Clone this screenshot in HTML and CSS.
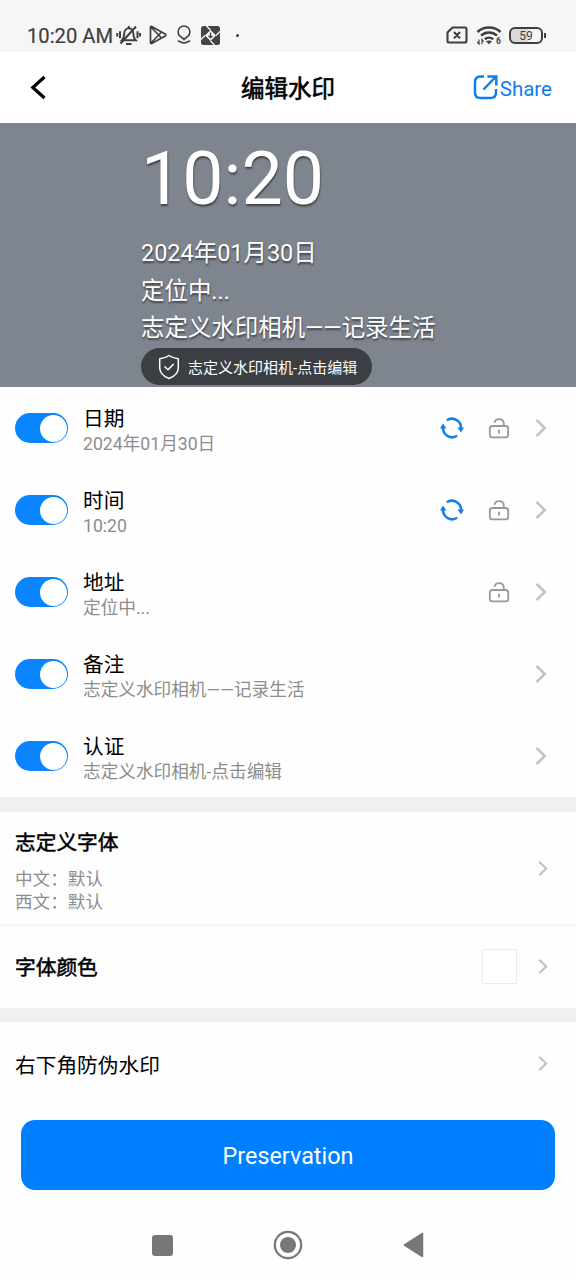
FILE: index.html
```html
<!DOCTYPE html>
<html lang="zh-CN">
<head>
<meta charset="utf-8">
<title>编辑水印</title>
<link rel="stylesheet" href="styles.css">
</head>
<body>
<svg class="defs" width="0" height="0" aria-hidden="true">
  <symbol id="sync" viewBox="0 0 24 24">
    <path d="M6.800 4.200A9.200 9.200 0 0 1 21 12M17.200 19.800A9.200 9.200 0 0 1 3 12" fill="none" stroke="currentColor" stroke-width="2.500"/>
    <path d="M17.600 11.600h6.400l-3 5zM0 12.400h6.400L3 7.400z" fill="currentColor"/>
  </symbol>
  <symbol id="lock" viewBox="0 0 22 22">
    <rect x="1.800" y="9" width="18.400" height="11.300" rx="2.600" fill="none" stroke="currentColor" stroke-width="1.800"/>
    <path d="M6.300 5.800C7 3.400 8.600 2.200 11 2.200c3 0 4.800 2 4.800 4.600V9M11 12.800v3.800" fill="none" stroke="currentColor" stroke-width="1.800"/>
  </symbol>
  <symbol id="chevron" viewBox="0 0 12 20">
    <path d="M1.500 1.800L9.800 10l-8.300 8.200" fill="none" stroke="currentColor" stroke-width="2.600"/>
  </symbol>
</svg>

<header class="status">
  <span class="clock">10:20 AM</span>
  <svg class="st-bell" width="25" height="22" viewBox="0 0 25 22" fill="none" stroke="currentColor" stroke-width="2">
    <path d="M6 16.200c1.700-1.600 2.200-3.200 2.200-6.400 0-3.200 2-5.600 4.600-5.600s4.600 2.400 4.600 5.600c0 3.200.5 4.800 2.200 6.400zM12.800 2v2.500"/>
    <path d="M10 20h5.500M4.500 19.500L20 2.500M1.200 9v3.600M4 7.200v7M21.500 7.200v7M24 9v3.600"/>
  </svg>
  <svg class="st-play" width="18" height="20" viewBox="0 0 18 20" fill="none" stroke="currentColor" stroke-width="1.700" stroke-linejoin="round">
    <path d="M1.500 2.200v15.600c0 .8.6 1 1.200.6L16.200 11c.8-.5.8-1.500 0-2L2.700 1.500c-.6-.3-1.200 0-1.200.7zM2 2l10.500 11M2 18L12.500 7"/>
  </svg>
  <svg class="st-pin" width="14" height="20" viewBox="0 0 14 20" fill="none" stroke="currentColor" stroke-width="1.600">
    <path d="M7 14.400L3 11.200a5.900 5.900 0 1 1 8 0zM1 15.600c3.400 3 8.600 3 12 0"/>
  </svg>
  <svg class="st-app" width="19" height="19" viewBox="0 0 19 19">
    <rect width="19" height="19" rx="2.500" fill="#444"/>
    <path d="M9.500 4l5.500 5.500L9.500 15 4 9.500z" fill="#f6f6f6"/>
    <path d="M9.500 4L5.500 0M15 9.500L19 5.500M9.500 15l4 4M4 9.500L0 13.500" stroke="#f6f6f6" stroke-width="1.400"/>
    <path d="M9.500 6.500v5M7.500 9.800l2 2 2-2" stroke="#444" stroke-width="1.300" fill="none"/>
  </svg>
  <i class="st-dot"></i>
  <div class="st-right">
    <svg width="22" height="18" viewBox="0 0 22 18" fill="none" stroke="currentColor" stroke-width="2.100">
      <path d="M6.500 1.500H19a1.500 1.500 0 0 1 1.500 1.500v12a1.500 1.500 0 0 1-1.500 1.500H3A1.500 1.500 0 0 1 1.500 15V6.500zM8 6l6 6.400M14 6l-6 6.400"/>
    </svg>
    <svg class="wifi" width="26" height="23" viewBox="0 -2 26 23">
      <path d="M1.500 6c6.200-6 16.800-6 23 0M5 9.700c4.600-4.200 11.400-4.200 16 0M8.800 13.200c2.400-2 6-2 8.400 0" fill="none" stroke="currentColor" stroke-width="2.500"/>
      <path d="M10 15.300c1.800-1.200 4.200-1.200 6 0l-3 3z" fill="currentColor"/>
      <path d="M3 13.500v4.500l-1.800-2M6 18v-4.500l1.600 2" fill="none" stroke="currentColor" stroke-width="1.200"/>
      <text x="20" y="18.200" class="wifi-n">6</text>
    </svg>
    <div class="battery"><span>59</span></div><i class="nub"></i>
  </div>
</header>

<nav class="titlebar">
  <svg class="back" width="18" height="26" viewBox="0 0 18 26"><path d="M15.500 2L3.800 12.500l11.700 10.500" fill="none" stroke="#000" stroke-width="3.200"/></svg>
  <h1>编辑水印</h1>
  <a class="share">
    <svg width="26" height="26" viewBox="0 0 26 26" fill="none" stroke="currentColor" stroke-width="2.500">
      <path d="M11 2.500H7.500c-3.500 0-5.500 2-5.500 5.500v10.500C2 22 4 24 7.500 24h10c3.500 0 5.500-2 5.500-5.500V15M10.500 15.500L22.500 3M14.500 2.500H23.300V11.500"/>
    </svg><span>Share</span>
  </a>
</nav>

<section class="preview">
  <div class="big">10:20</div>
  <div class="line">2024年01月30日</div>
  <div class="line">定位中...</div>
  <div class="line">志定义水印相机——记录生活</div>
  <div class="badge">
    <svg width="22" height="26" viewBox="0 0 22 26" fill="none" stroke="#fff" stroke-width="1.500" stroke-linejoin="round"><path d="M11 1.500c2.800 2 5.800 3 9.300 3.200v9c0 5-3.500 8.500-9.300 10.800-5.800-2.300-9.300-5.800-9.300-10.800v-9C5.200 4.500 8.200 3.500 11 1.500zM6.500 12.500l3.500 3.300L15.700 10"/></svg>
    <span>志定义水印相机-点击编辑</span>
  </div>
</section>

<main>
  <ul class="items">
    <li><i class="toggle"></i><div class="txt"><b>日期</b><small>2024年01月30日</small></div><svg class="sync"><use href="#sync"/></svg><svg class="lock"><use href="#lock"/></svg><svg class="chev"><use href="#chevron"/></svg></li>
    <li><i class="toggle"></i><div class="txt"><b>时间</b><small>10:20</small></div><svg class="sync"><use href="#sync"/></svg><svg class="lock"><use href="#lock"/></svg><svg class="chev"><use href="#chevron"/></svg></li>
    <li><i class="toggle"></i><div class="txt"><b>地址</b><small>定位中...</small></div><svg class="lock"><use href="#lock"/></svg><svg class="chev"><use href="#chevron"/></svg></li>
    <li><i class="toggle"></i><div class="txt"><b>备注</b><small>志定义水印相机——记录生活</small></div><svg class="chev"><use href="#chevron"/></svg></li>
    <li><i class="toggle"></i><div class="txt"><b>认证</b><small>志定义水印相机-点击编辑</small></div><svg class="chev"><use href="#chevron"/></svg></li>
  </ul>
  <section class="row fonts">
    <div class="grow"><h2>志定义字体</h2><p>中文：默认</p><p>西文：默认</p></div>
    <svg class="chev small"><use href="#chevron"/></svg>
  </section>
  <section class="row color">
    <h2 class="grow">字体颜色</h2>
    <i class="swatch"></i>
    <svg class="chev small"><use href="#chevron"/></svg>
  </section>
  <section class="row corner">
    <span class="grow">右下角防伪水印</span>
    <svg class="chev small"><use href="#chevron"/></svg>
  </section>
</main>

<button class="save">Preservation</button>

<footer class="sysnav">
  <i class="square"></i>
  <svg width="30" height="30" viewBox="0 0 30 30"><circle cx="15" cy="15" r="13.200" fill="none" stroke="#777" stroke-width="2.200"/><circle cx="15" cy="15" r="8" fill="#777"/></svg>
  <svg width="22" height="26" viewBox="0 0 22 26"><path d="M19.500 1.500v23L1.500 13z" fill="#777" stroke="#777" stroke-width="1.500" stroke-linejoin="round"/></svg>
</footer>
</body>
</html>
```
FILE: styles.css
```css
* { box-sizing: border-box; margin: 0; padding: 0; }
body {
  width: 576px;
  height: 1280px;
  overflow: hidden;
  background: #fefefe;
  color: #000;
  font-family: Roboto, "Noto Sans CJK SC", sans-serif;
  display: flex;
  flex-direction: column;
}
svg { display: block; flex: none; }
i { display: block; flex: none; }
.defs { display: none; }

.status {
  height: 52px;
  flex: none;
  padding: 19px 30px 1px 27px;
  background: #f6f6f6;
  color: #3f3f3f;
  display: flex;
  align-items: center;
}
.clock { font-size: 20.200px; width: 89px; padding-top: 1px; white-space: nowrap; -webkit-text-stroke: 0.2px #3f3f3f; }
.st-play { margin-left: 8px; }
.st-pin { margin-left: 10px; }
.st-app { margin-left: 10px; }
.st-dot { width: 3px; height: 3px; border-radius: 50%; background: #3f3f3f; margin-left: 16px; }
.st-right { margin-left: auto; display: flex; align-items: center; }
.wifi { margin-left: 8px; }
.wifi-n { font-size: 8.500px; font-weight: 700; fill: #3f3f3f; }
.battery {
  width: 34px;
  height: 17px;
  margin-left: 7px;
  border: 2px solid #3f3f3f;
  border-radius: 6px;
  background: linear-gradient(90deg, #d9d9d9 50%, #f6f6f6 65%);
  font-size: 12px;
  line-height: 14px;
  text-align: center;
}
.nub { width: 2px; height: 5px; margin-left: 1px; background: #3f3f3f; }

.titlebar {
  height: 71px;
  flex: none;
  padding: 0 24px 0 29px;
  display: grid;
  grid-template-columns: 80px 1fr 85px;
  align-items: center;
  background: #fff;
}
.titlebar h1 { font-size: 23.500px; font-weight: 400; text-align: center; padding-bottom: 2px; -webkit-text-stroke: 0.600px #000; }
.share { display: flex; align-items: center; justify-content: flex-end; gap: 1px; color: #0f7ee8; font-size: 20.500px; }
.share svg { margin-bottom: 1px; }
.share span { padding-top: 2px; }

.preview {
  height: 264px;
  flex: none;
  padding: 13px 0 0 141px;
  background: #7f858f;
  color: #fff;
  text-shadow: 0.500px 1.500px 2px rgba(0, 0, 0, .5);
}
.big { font-size: 73.500px; line-height: 86px; height: 98px; }
.line { font-size: 23.450px; line-height: 38px; height: 37.700px; white-space: nowrap; }
.badge {
  width: 231px;
  height: 37px;
  margin-top: 1px;
  padding-left: 17px;
  border-radius: 19px;
  background: #3b3e43;
  display: flex;
  align-items: center;
  gap: 8px;
  font-size: 15px;
  white-space: nowrap;
  text-shadow: none;
}
.badge span { padding-bottom: 1px; }

.items { list-style: none; border-bottom: 15px solid #f0f0f0; }
.items li { height: 82px; padding: 0 29px 0 15px; display: flex; align-items: center; }
.toggle { width: 53px; height: 30px; border-radius: 15px; background: #0a84ff; padding: 1.500px; }
.toggle::after { content: ""; display: block; width: 27px; height: 27px; margin-left: 23.500px; border-radius: 50%; background: #fff; }
.txt { flex: 1; margin-left: 15px; padding-top: 5px; }
.txt b { display: block; font-size: 20.700px; font-weight: 400; line-height: 26px; }
.txt small { display: block; font-size: 17.650px; line-height: 24px; color: #8d8d8d; white-space: nowrap; }
.sync { width: 24px; height: 24px; color: #157ce8; }
.lock { width: 22px; height: 22px; margin-left: 24px; color: #999; }
.chev { width: 12px; height: 20px; margin-left: 25px; color: #c2c2c2; }
.chev.small { width: 10px; height: 17px; }

.row { display: flex; align-items: center; padding: 0 28px 0 15px; font-size: 20.700px; }
.grow { flex: 1; }
.row h2 { font-size: 20.700px; font-weight: 400; line-height: 30px; -webkit-text-stroke: 0.500px #000; }
.fonts { height: 114px; border-bottom: 2px solid #f5f5f5; }
.fonts .grow { padding-top: 6px; }
.fonts h2 { margin-bottom: 10px; }
.fonts p { font-size: 17.600px; line-height: 23.500px; color: #8d8d8d; }
.color { height: 96px; padding-bottom: 1px; border-bottom: 14px solid #f0f0f0; }
.color h2 { padding-top: 3px; }
.swatch { width: 35px; height: 35px; border: 1.500px solid #ebebeb; background: #fff; }
.color .chev { margin-left: 21px; }
.corner { height: 84px; padding-bottom: 1px; }

.save {
  margin: 14px 21px 0;
  height: 70px;
  flex: none;
  border: 0;
  border-radius: 14px;
  background: #0080ff;
  color: #fff;
  font: 400 23.400px/70px Roboto, sans-serif;
  padding-top: 1px;
}
.sysnav { flex: 1; display: flex; align-items: center; justify-content: center; gap: 100px; padding: 20px 0 0; }
.square { width: 21px; height: 21px; border-radius: 3px; background: #777; }
```
